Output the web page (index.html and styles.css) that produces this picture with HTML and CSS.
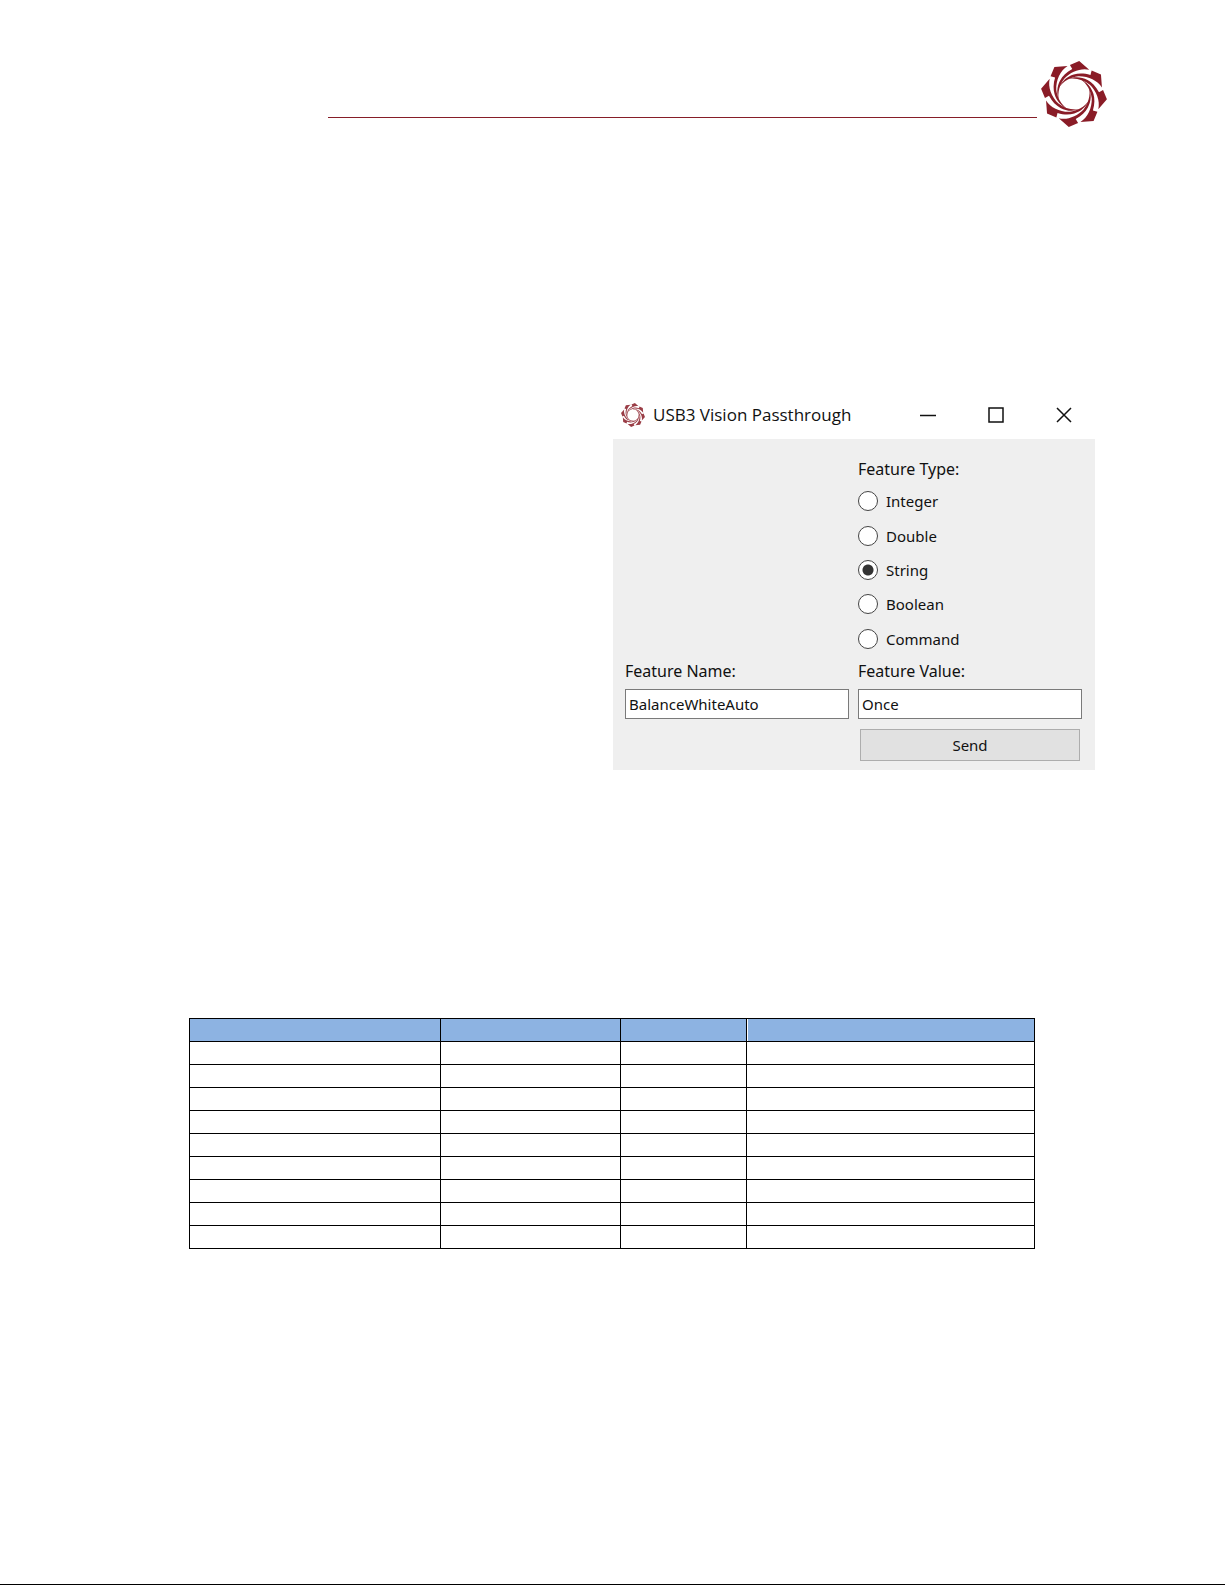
FILE: index.html
```
<!DOCTYPE html>
<html lang="en">
<head>
    <meta charset="UTF-8">
    <meta name="viewport" content="width=device-width, initial-scale=1.0">
    <title>USB3 Vision Passthrough</title>
    <link rel="stylesheet" href="styles.css">
</head>
<body>
    <svg class="defs" width="0" height="0" aria-hidden="true">
        <defs>
            <path id="blade" d="M0-101 L34-80 C8-82 -20-66 -36-42 C-47-22 -51 2 -42 27 C-53 6 -55-14 -48-34 C-43-48 -33-62 -17-74 L-26-85 Z"/>
            <g id="logo" transform="rotate(9)">
                <use href="#blade"/>
                <use href="#blade" transform="rotate(45)"/>
                <use href="#blade" transform="rotate(90)"/>
                <use href="#blade" transform="rotate(135)"/>
                <use href="#blade" transform="rotate(180)"/>
                <use href="#blade" transform="rotate(225)"/>
                <use href="#blade" transform="rotate(270)"/>
                <use href="#blade" transform="rotate(315)"/>
            </g>
        </defs>
    </svg>

    <header class="page-header">
        <div class="rule"></div>
        <svg class="logo" viewBox="-100 -100 200 200"><use href="#logo"/></svg>
    </header>

    <main>
        <section class="window">
            <div class="title-bar">
                <svg class="app-icon" viewBox="-100 -100 200 200"><use href="#logo"/></svg>
                <h1>USB3 Vision Passthrough</h1>
                <div class="window-buttons">
                    <button type="button" aria-label="Minimize">
                        <svg viewBox="0 0 16 16"><path d="M0 8.5H16"/></svg>
                    </button>
                    <button type="button" aria-label="Maximize">
                        <svg viewBox="0 0 16 16"><path d="M1 1H15V15H1Z"/></svg>
                    </button>
                    <button type="button" aria-label="Close">
                        <svg viewBox="0 0 16 16"><path d="M1 1L15 15M15 1L1 15"/></svg>
                    </button>
                </div>
            </div>

            <form class="feature-form">
                <fieldset class="feature-type">
                    <legend>Feature Type:</legend>
                    <div class="options">
                        <label><input type="radio" name="type"> Integer</label>
                        <label><input type="radio" name="type"> Double</label>
                        <label><input type="radio" name="type" checked> String</label>
                        <label><input type="radio" name="type"> Boolean</label>
                        <label><input type="radio" name="type"> Command</label>
                    </div>
                </fieldset>
                <div class="field">
                    <label for="feature-name">Feature Name:</label>
                    <input type="text" id="feature-name" value="BalanceWhiteAuto">
                </div>
                <div class="field">
                    <label for="feature-value">Feature Value:</label>
                    <input type="text" id="feature-value" value="Once">
                </div>
                <button type="button" class="send">Send</button>
            </form>
        </section>

        <table class="feature-table">
            <colgroup>
                <col class="col-name">
                <col class="col-type">
                <col class="col-value">
                <col>
            </colgroup>
            <thead>
                <tr><th></th><th></th><th></th><th></th></tr>
            </thead>
            <tbody>
                <tr><td></td><td></td><td></td><td></td></tr>
                <tr><td></td><td></td><td></td><td></td></tr>
                <tr><td></td><td></td><td></td><td></td></tr>
                <tr><td></td><td></td><td></td><td></td></tr>
                <tr><td></td><td></td><td></td><td></td></tr>
                <tr><td></td><td></td><td></td><td></td></tr>
                <tr><td></td><td></td><td></td><td></td></tr>
                <tr><td></td><td></td><td></td><td></td></tr>
                <tr><td></td><td></td><td></td><td></td></tr>
            </tbody>
        </table>
    </main>
</body>
</html>
```
FILE: styles.css
```
* {
    box-sizing: border-box;
}
body {
    margin: 0;
    min-height: 100vh;
    background-color: #fff;
    color: #111;
    font-family: "Noto Sans", "Open Sans", sans-serif;
    font-size: 16px;
    line-height: 20px;
    border-bottom: 1px solid #000;
}
.defs {
    display: block;
}
.page-header {
    display: flex;
    gap: 4px;
    padding: 61px 118px 0 328px;
}
.rule {
    flex: 1;
    height: 57px;
    border-bottom: 1px solid #861e28;
}
.logo {
    width: 66px;
    height: 66px;
    fill: #8a1c27;
    overflow: visible;
}
main {
    padding: 263px 130px 0 189px;
}
.window {
    max-width: 482px;
    margin-left: auto;
}
.title-bar {
    display: flex;
    align-items: center;
    height: 49px;
    padding: 0 0 0 8px;
}
.app-icon {
    width: 24px;
    height: 24px;
    fill: #9a3d46;
}
.title-bar h1 {
    margin: 0 0 0 8px;
    font-family: "Open Sans", sans-serif;
    font-size: 17px;
    font-weight: normal;
}
.window-buttons {
    display: flex;
    gap: 20px;
    margin-left: auto;
    padding-right: 7px;
}
.window-buttons button {
    display: flex;
    align-items: center;
    justify-content: center;
    width: 48px;
    height: 32px;
    padding: 0;
    border: none;
    background: none;
}
.window-buttons svg {
    width: 16px;
    height: 16px;
    fill: none;
    stroke: #111;
    stroke-width: 1.5;
}
.feature-form {
    display: grid;
    grid-template-columns: 1fr 1fr;
    column-gap: 9px;
    padding: 20px 13px 9px 12px;
    background-color: #efefef;
}
.feature-type {
    grid-column: 2;
    margin: 0;
    padding: 0;
    border: none;
}
.feature-type legend {
    padding: 0;
    margin-bottom: 5px;
}
.options {
    display: grid;
    grid-auto-rows: 1fr;
    height: 172px;
}
.options label {
    display: flex;
    align-items: center;
    gap: 8px;
    font-size: 15px;
}
.options input {
    appearance: none;
    width: 20px;
    height: 20px;
    margin: 0;
    border: 1px solid #444;
    border-radius: 50%;
    background-color: #fff;
}
.options input:checked {
    background-image: radial-gradient(circle, #333 5px, transparent 6px);
}
.field label {
    display: block;
    margin: 5px 0 8px;
}
.field input {
    display: block;
    width: 100%;
    height: 30px;
    padding: 0 3px;
    border: 1px solid #7a7a7a;
    background-color: #fff;
    color: inherit;
    font: inherit;
    font-size: 15px;
}
.send {
    grid-column: 2;
    height: 32px;
    margin: 10px 2px 0;
    border: 1px solid #adadad;
    background-color: #e1e1e1;
    color: inherit;
    font: inherit;
    font-size: 15px;
}
.feature-table {
    width: calc(100% - 60px);
    margin-top: 248px;
    border-collapse: collapse;
    table-layout: fixed;
}
.feature-table th, .feature-table td {
    height: 23px;
    padding: 0;
    border: 1px solid #000;
}
.feature-table th {
    background-color: #8db3e2;
}
.feature-table th:last-child {
    box-shadow: inset 1px 0 #fff;
}
.col-name {
    width: 251px;
}
.col-type {
    width: 180px;
}
.col-value {
    width: 126px;
}
```
